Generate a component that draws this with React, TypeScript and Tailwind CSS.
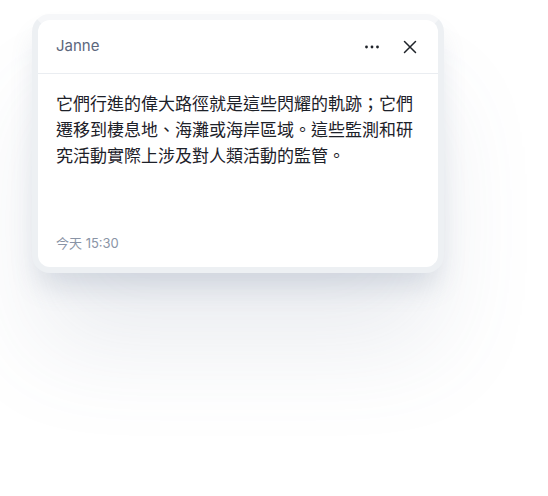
import React from 'react';

const DotsIcon = () => (
  <svg width="18" height="18" viewBox="0 0 18 18" fill="#1f2329">
    <circle cx="3.5" cy="9" r="1.4" />
    <circle cx="9" cy="9" r="1.4" />
    <circle cx="14.5" cy="9" r="1.4" />
  </svg>
);

const CloseIcon = () => (
  <svg width="16" height="16" viewBox="0 0 16 16" fill="none" stroke="#1f2329" strokeWidth="1.5" strokeLinecap="round">
    <path d="M2.5 2.5l11 11M13.5 2.5l-11 11" />
  </svg>
);

export default function App() {
  return (
    <div className="w-[548px] h-[496px] bg-white pl-[32px] pt-[14px]" style={{ fontFamily: 'Inter, "Noto Sans CJK TC", sans-serif' }}>
      <div className="w-[412px] rounded-[18px] border-[6px] border-[#edf0f3] border-t-[#f6f7f9] bg-white shadow-[0_18px_28px_-6px_rgba(90,110,140,0.2),0_80px_100px_-8px_rgba(90,110,140,0.13)]">
        {/* Header */}
        <div className="flex h-[54px] items-center justify-between rounded-t-[12px] border-b border-[#eaedf1] pl-[18px] pr-[20px]">
          <span className="text-[15px] text-[#5c677c]">Janne</span>
          <div className="flex items-center gap-[21px]">
            <button type="button" className="flex items-center"><DotsIcon /></button>
            <button type="button" className="flex items-center"><CloseIcon /></button>
          </div>
        </div>
        {/* Body */}
        <div className="px-[18px] pt-[17px] pb-[16px]">
          <p className="min-h-[128px] text-[17px] leading-[26px] text-[#1d2129]">
            它們行進的偉大路徑就是這些閃耀的軌跡；它們遷移到棲息地、海灘或海岸區域。這些監測和研究活動實際上涉及對人類活動的監管。
          </p>
          <div className="mt-[16px] text-[13px] leading-[16px] text-[#8a94a6]">今天 15:30</div>
        </div>
      </div>
    </div>
  );
}
